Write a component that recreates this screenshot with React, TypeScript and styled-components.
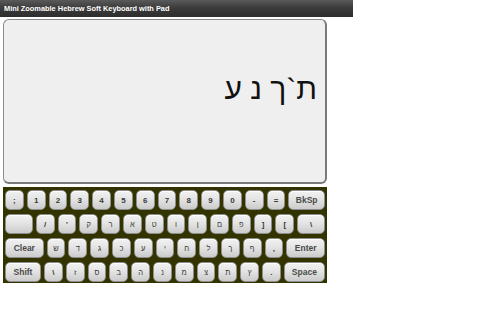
import React from "react";
import styled, { createGlobalStyle } from "styled-components";

const Global = createGlobalStyle`
  html, body { margin: 0; padding: 0; background: #ffffff; }
  body { font-family: "Liberation Sans", Arial, sans-serif; }
`;

const Page = styled.div`
  width: 496px;
  height: 310px;
  display: flex;
  flex-direction: column;
  align-items: flex-start;
`;

const TitleBar = styled.div`
  width: 353px;
  height: 17px;
  box-sizing: border-box;
  padding-left: 4px;
  display: flex;
  align-items: center;
  background: linear-gradient(#5a5a5a, #3c3c3c 45%, #2e2e2e);
  color: #ffffff;
  font-family: "Liberation Sans", Arial, sans-serif;
  font-weight: bold;
  font-size: 7.4px;
  white-space: nowrap;
`;

const Body = styled.div`
  display: flex;
  flex-direction: column;
  gap: 3px;
  padding: 2px 0 0 3px;
`;

const Pad = styled.div`
  width: 324px;
  height: 165px;
  box-sizing: border-box;
  background: #efefef;
  border: 1px solid #8c8c8c;
  border-right: 2px solid #7a7a7a;
  border-bottom: 2px solid #7a7a7a;
  border-radius: 6px;
  display: flex;
  align-items: flex-start;
  justify-content: flex-start;
  direction: rtl;
  padding: 54px 8px 0 0;
  font-family: "Liberation Sans", Arial, sans-serif;
  font-size: 30px;
  color: #111111;
  line-height: 1;
`;

const Keyboard = styled.div`
  width: 324px;
  box-sizing: border-box;
  background: #333300;
  padding: 3px 2px 1px 2px;
  display: flex;
  flex-direction: column;
  gap: 4px;
`;

const Row = styled.div`
  display: flex;
  gap: 3px;
`;

const Key = styled.div<{ $w?: number; $grow?: boolean; $kind: "big" | "num" | "heb" }>`
  flex: ${(p) => (p.$grow ? "1 1 0" : `0 0 ${p.$w ?? 18.8}px`)};
  height: 20px;
  box-sizing: border-box;
  border-radius: 5px;
  border: 1px solid #8e8e8e;
  background: linear-gradient(#f2f2f2, #e4e4e4 45%, #cbcbcb);
  box-shadow: inset 0 1px 0 #ffffff;
  display: flex;
  align-items: center;
  justify-content: center;
  color: ${(p) => (p.$kind === "big" ? "#4a4a4a" : "#3a3a3a")};
  font-family: "Liberation Sans", Arial, sans-serif;
  font-size: ${(p) => (p.$kind === "big" ? "8.5px" : p.$kind === "num" ? "8px" : "7.5px")};
  font-weight: ${(p) => (p.$kind === "heb" ? "normal" : "bold")};
  white-space: nowrap;
`;

type K = { l: string; w?: number; grow?: boolean; big?: boolean };

const rows: K[][] = [
  [
    ...[";", "1", "2", "3", "4", "5", "6", "7", "8", "9", "0", "-", "="].map((l) => ({ l })),
    { l: "BkSp", grow: true, big: true },
  ],
  [
    { l: "", grow: true },
    ...["/", "'", "ק", "ר", "א", "ט", "ו", "ן", "ם", "פ", "]", "["].map((l) => ({ l })),
    { l: "\\", grow: true },
  ],
  [
    { l: "Clear", w: 38.6, big: true },
    ...["ש", "ד", "ג", "כ", "ע", "י", "ח", "ל", "ך", "ף", ","].map((l) => ({ l })),
    { l: "Enter", grow: true, big: true },
  ],
  [
    { l: "Shift", w: 36, big: true },
    ...["\\", "ז", "ס", "ב", "ה", "נ", "מ", "צ", "ת", "ץ", "."].map((l) => ({ l })),
    { l: "Space", grow: true, big: true },
  ],
];

const kindOf = (k: K): "big" | "num" | "heb" =>
  k.big ? "big" : /[\u0590-\u05FF]/.test(k.l) ? "heb" : "num";

export default function App() {
  return (
    <Page>
      <Global />
      <TitleBar>Mini Zoomable Hebrew Soft Keyboard with Pad</TitleBar>
      <Body>
        <Pad>ת`ך נ ע</Pad>
        <Keyboard>
          {rows.map((r, i) => (
            <Row key={i}>
              {r.map((k, j) => (
                <Key key={j} $w={k.w} $grow={k.grow} $kind={kindOf(k)}>
                  {k.l}
                </Key>
              ))}
            </Row>
          ))}
        </Keyboard>
      </Body>
    </Page>
  );
}
